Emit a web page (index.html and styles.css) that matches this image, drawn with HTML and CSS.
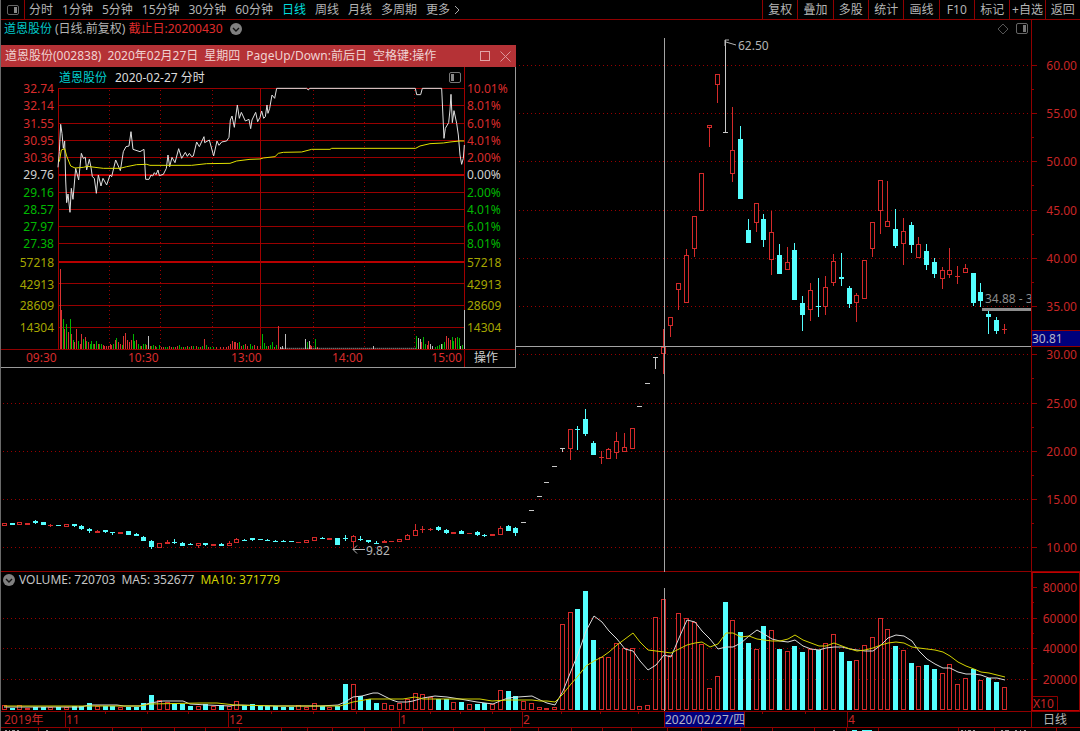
FILE: index.html
```html
<!DOCTYPE html>
<html lang="zh-CN">
<head>
<meta charset="utf-8">
<title>道恩股份 日线</title>
<link rel="stylesheet" href="styles.css">
</head>
<body>
<main class="app">
  <nav class="toolbar">
    <button class="panel-toggle" aria-label="侧栏">
      <svg width="12" height="12" viewBox="0 0 12 12"><rect x=".5" y="1.5" width="11" height="9" rx="1.5" fill="none" stroke="#666"/><rect x="7" y="3" width="3" height="6" fill="#888"/></svg>
    </button>
    <div class="periods">
      <button>分时</button><button>1分钟</button><button>5分钟</button><button>15分钟</button><button>30分钟</button><button>60分钟</button><button class="active">日线</button><button>周线</button><button>月线</button><button>多周期</button><button class="more">更多<svg width="6" height="10" viewBox="0 0 6 10"><path d="M1 1l4 4-4 4" fill="none" stroke="#aaa"/></svg></button>
    </div>
    <div class="actions">
      <button>复权</button><button>叠加</button><button>多股</button><button>统计</button><button>画线</button><button>F10</button><button>标记</button><button>+自选</button><button>返回</button>
    </div>
  </nav>

  <header class="chart-head">
    <div class="chart-title">
      <span class="name">道恩股份</span><span class="mode">(日线.前复权)</span><span class="until">截止日:20200430</span>
      <button class="round" aria-label="展开"><svg width="12" height="12" viewBox="0 0 12 12"><circle cx="6" cy="6" r="6" fill="#808080"/><path d="M3 5l3 3 3-3" fill="none" stroke="#111" stroke-width="1.4"/></svg></button>
    </div>
    <div class="head-icons">
      <svg width="12" height="12" viewBox="0 0 12 12"><path d="M6 1l5 5-5 5-5-5z" fill="none" stroke="#555"/></svg>
      <svg width="12" height="12" viewBox="0 0 12 12"><rect x=".5" y=".5" width="11" height="10" rx="1.5" fill="none" stroke="#666"/><rect x="7" y="2" width="3" height="7" fill="#777"/></svg>
    </div>
    <div class="axis-cell"></div>
  </header>
  <svg id="price" class="chart" viewBox="1 38 1079 534" role="img" aria-label="日线"></svg>

  <header class="volume-head">
    <div class="volume-title">
      <button class="round" aria-label="展开"><svg width="12" height="12" viewBox="0 0 12 12"><circle cx="6" cy="6" r="6" fill="#808080"/><path d="M3 5l3 3 3-3" fill="none" stroke="#111" stroke-width="1.4"/></svg></button>
      <span>VOLUME: 720703</span><span>MA5: 352677</span><span class="ma10">MA10: 371779</span>
    </div>
    <div class="axis-cell"></div>
  </header>
  <svg id="volume" class="chart" viewBox="1 588 1079 143" role="img" aria-label="成交量"></svg>

  <section class="popup">
    <header class="popup-head">
      <h1><span>道恩股份(002838)</span> <span>2020年02月27日</span> <span>星期四</span> <span>PageUp/Down:前后日</span> <span>空格键:操作</span></h1>
      <button aria-label="最大化"><svg width="11" height="11" viewBox="0 0 11 11"><rect x=".5" y=".5" width="9" height="9" fill="none" stroke="#e2a5a7"/></svg></button>
      <button aria-label="关闭"><svg width="11" height="11" viewBox="0 0 11 11"><path d="M.5.5l10 10M10.500.5l-10 10" fill="none" stroke="#dc9799"/></svg></button>
    </header>
    <svg id="minute" class="chart" viewBox="1 67 514 300" role="img" aria-label="分时"></svg>
  </section>
</main>
<script src="chart.js"></script>
</body>
</html>
```

FILE: styles.css
```css
* { box-sizing: border-box; }
body {
  margin: 0;
  background: #000;
  color: #b4b4b4;
  font: 12px/16px "Noto Sans", "Noto Sans CJK SC", sans-serif;
}
button {
  display: flex;
  align-items: center;
  justify-content: center;
  padding: 0;
  border: 0;
  background: none;
  color: inherit;
  font: inherit;
  white-space: nowrap;
}
svg { display: block; flex: none; }
.app {
  position: relative;
  min-height: 100vh;
  border-left: 1px solid #6a6a6a;
  overflow: hidden;
}
.toolbar {
  display: flex;
  height: 20px;
  border-bottom: 1px solid #900000;
}
.panel-toggle { width: 24px; border-right: 1px solid #900000; }
.periods { display: flex; flex: 1; gap: 9px; padding-left: 4px; }
.periods .active { color: #00dede; }
.more { gap: 4px; }
.actions { display: grid; grid-template-columns: repeat(9, 1fr); width: 318px; }
.actions button { border-left: 1px solid #900000; }

.chart-head, .volume-head { display: flex; }
.chart-head { height: 18px; }
.chart-title, .volume-title { display: flex; align-items: center; flex: 1; }
.chart-title { padding-left: 3px; gap: 3px; }
.chart-title .name { color: #00c8c8; }
.until { color: #e02c2c; }
.round { margin-left: 4px; border-radius: 50%; }
.head-icons { display: flex; align-items: center; gap: 7px; padding-right: 3px; }
.axis-cell { width: 49px; border-left: 1px solid #900000; }
.volume-head { height: 16px; color: #c4c4c4; }
.volume-title { gap: 6px; }
.volume-title .round { margin: 0 -2px 0 2px; }
.ma10 { color: #d0d000; }
.volume-head .axis-cell { border-left: 2px solid #a00000; border-top: 1px solid #c00000; border-right: 1px solid #900000; }

.chart { width: 100%; height: auto; overflow: visible; }
.chart text { font-size: 12px; }

.popup {
  position: absolute;
  left: 0;
  top: 45px;
  width: 515px;
  border: solid #9a9a9a;
  border-width: 0 1px 1px 0;
  background: #000;
}
.popup-head {
  display: flex;
  align-items: center;
  gap: 9px;
  height: 22px;
  margin-right: -1px;
  padding: 0 5px 0 4px;
  background: #b53236;
  color: #f0d2d2;
}
.popup-head h1 {
  display: flex;
  flex: 1;
  gap: 6px;
  margin: 0;
  font: inherit;
  white-space: nowrap;
}
```

FILE: chart.js
```js
const RED = '#d42a2a', CYAN = '#54ffff', WHITE = '#c8c8c8';
const GRID = '#980000', FRAME = '#900000', LABEL = '#c82626', YELLOW = '#d4d400';

const text = (x, y, s, fill, anchor = 'start') =>
  `<text x="${x}" y="${y + 4}" fill="${fill}" text-anchor="${anchor}">${s}</text>`;
const rect = (x, y, w, h, fill) =>
  `<rect x="${x}" y="${y}" width="${w}" height="${h}" fill="${fill}" shape-rendering="crispEdges"/>`;
const hollow = (x, y, w, h) =>
  `<rect x="${x + .5}" y="${y + .5}" width="${w - 1}" height="${Math.max(h - 1, 1)}" fill="#000" stroke="${RED}"/>`;
const dotsH = (x1, x2, y) =>
  `<path d="M${x1} ${y + .5}H${x2}" stroke="${GRID}" stroke-dasharray="1 3"/>`;
const dotsV = (x, y1, y2) =>
  `<path d="M${x + .5} ${y1}V${y2}" stroke="#a00000" stroke-dasharray="1 3"/>`;
const line = (pts, stroke, extra = '') =>
  `<polyline points="${pts}" fill="none" stroke="${stroke}" ${extra}/>`;
const centre = i => Math.round(4.9 + 7.75 * i);

/* kind, high, body top, body bottom, low
   h hollow red, r solid red, c cyan, w white */
const candles = `h 523 523 526 526|c 523 523 525 525|h 522 522 525 525|r 523 523 525 525|c 520 521 523 524|c 522 522 525 525|r 524 525 526 527|c 525 525 526 526|h 524 524 527 527|c 524 524 526 527
c 525 526 529 530|c 528 529 531 533|r 530 531 533 533|c 530 530 532 533|c 532 532 533 535|r 532 532 534 534|c 531 531 535 535|c 533 534 536 536|c 536 537 541 541|c 540 541 547 549
h 543 543 548 548|r 540 542 544 544|c 539 542 543 544|c 542 543 546 546|c 543 544 545 545|h 543 543 546 548|c 543 543 545 546|r 544 544 546 546|c 543 544 546 546|h 541 543 546 546
h 538 539 543 543|c 539 540 541 541|c 538 538 540 541|c 539 539 540 540|c 539 540 541 541|c 540 541 542 542|c 540 541 542 542|c 541 541 542 542|r 542 542 543 543|h 540 540 543 543
h 537 537 541 541|c 537 538 539 539|r 538 538 540 540|c 538 538 545 545|c 535 538 539 541|h 535 536 542 549|c 536 539 540 541|c 540 540 542 543|c 541 543 544 544|r 540 541 543 543
r 541 541 542 542|h 539 539 542 542|h 534 535 540 540|h 524 530 536 536|r 526 529 530 533|r 528 529 530 531|c 526 527 530 531|c 529 530 533 534|r 532 532 534 534|c 530 531 534 534
r 533 533 534 534|c 531 532 535 536|c 534 535 536 537|r 534 534 536 536|h 526 528 535 535|c 525 526 531 531|c 527 528 533 536|w 522 522 523 523|w 510 510 511 511|w 496 496 497 497
w 482 482 483 483|w 466 466 467 467|w 448 448 449 452|h 429 429 449 460|c 426 429 430 450|c 409 419 434 436|c 441 443 455 455|r 451 457 458 464|h 448 449 459 459|h 432 441 453 459
h 433 447 452 452|h 428 428 449 449|w 406 406 407 407|w 383 383 384 384|w 357 357 358 369|h 329 347 354 374|h 317 317 326 337|h 283 283 290 310|h 249 255 303 303|h 216 216 249 257
h 173 173 211 211|h 125 125 128 147|h 74 74 85 103|w 40 132 133 133|h 107 150 174 182|c 126 139 199 199|c 219 230 243 243|h 203 203 223 232|c 214 219 240 247|h 211 232 260 275
c 244 255 274 274|h 247 262 270 270|c 243 250 300 300|c 296 303 315 331|h 283 290 310 321|c 278 306 307 317|h 276 287 307 315|h 254 261 283 286|c 253 277 279 286|c 286 288 304 308
h 293 295 303 322|h 260 260 299 299|h 222 222 249 257|h 180 180 211 234|h 181 221 227 227|c 209 229 246 248|h 218 231 244 265|c 222 225 245 253|h 237 244 258 258|c 244 251 265 270
c 258 262 274 278|h 267 270 279 289|h 248 270 275 278|r 266 276 277 284|h 264 268 273 273|c 273 273 303 306|c 283 292 301 307|c 311 314 317 334|c 317 320 331 334|r 324 329 330 334`
  .split(/[|\n]/).map(s => s.split(' '));

const volumeTop = [705,708,705,708,707,707,707,707,707,706,706,703,706,706,706,707,707,707,703,695,700,702,704,704,706,706,704,706,705,706,
  701,705,704,705,706,706,707,707,705,707,703,706,707,706,684,684,696,699,703,703,705,703,699,693,694,697,699,699,702,702,
  704,704,703,704,690,691,696,701,703,707,708,707,624,612,609,591,640,657,657,643,648,648,706,705,617,599,655,613,618,622,
  644,688,676,602,620,632,643,649,626,630,649,651,646,652,649,650,643,634,652,661,660,645,637,618,629,646,650,663,666,665,
  669,673,664,684,678,669,680,678,682,687];
/* early bars take the candle's colour, later ones are listed */
const fallingDays = [74, 75, 76, 93, 95, 96, 98, 100, 102, 103, 105, 108, 109, 115, 117, 119, 120, 125, 127, 128];
const isFalling = i => (i < 72 ? candles[i][0] === 'c' : fallingDays.includes(i));

const series = (s, ys) => s + ' ' + ys.map((y, k) => `${centre(68 + k)},${y}`).join(' ');
const ma5 = series('4,707 80,707 90,705 117,705 124,706 140,706 150,703 163,701 183,701 190,704 207,705 230,706 236,705 277,706 320,706 338,705 345,702 353,697 362,696 373,693 378,693 384,696 392,700 398,702 407,702 413,701 423,698 435,696 447,697 460,699 477,702 493,704 500,701 508,698 518,697',
  [696,700,703,705,691,671,654,631,616,622,631,639,649,651,661,670,665,655,657,638,620,622,631,639,649,647,647,643,636,630,634,639,641,642,640,646,649,650,648,647,647,649,650,651,651,645,638,635,636,641,651,659,664,668,668,672,674,674,675,678,678,680]);
const ma10 = series('4,706 140,706 150,704 200,703 217,703 235,705 277,706 340,706 353,702 370,699 403,699 415,697 423,699 480,699 492,701 508,700',
  [700,701,701,702,694,684,676,666,661,657,652,645,639,633,642,650,651,652,653,649,645,643,642,647,644,633,633,637,636,639,640,641,641,639,635,640,643,646,646,643,646,649,651,650,648,645,643,642,643,647,648,649,650,652,656,662,666,669,672,673,675,677]);

function drawPrice() {
  let s = '';
  for (let p = 60, k = 0; p >= 10; p -= 5, k++) {
    const y = Math.round(64.8 + 48.25 * k);
    s += dotsH(3, 1031, y) + rect(1031, y, 6, 1, FRAME) + text(1077, y + 1, p.toFixed(2), LABEL, 'end');
    if (k < 10) s += rect(1031, y + 24, 3, 1, FRAME);
  }
  s += rect(1031, 38, 1, 534, FRAME) + rect(1, 571, 1079, 1, FRAME);
  candles.forEach(([kind, ...v], i) => {
    const [high, top, bottom, low] = v.map(Number), x = centre(i);
    const color = kind === 'c' ? CYAN : kind === 'w' ? WHITE : RED;
    if (low > high) s += rect(x - 1, high, 1, low - high, color);
    s += kind === 'h' ? hollow(x - 3, top, 5, bottom - top) : rect(x - 3, top, 5, bottom - top, color);
  });
  s += '<path d="M736 45L726 42M725 46V40H729" fill="none" stroke="#b4b4b4"/>' + text(738, 46, '62.50', '#b4b4b4');
  s += '<path d="M365 549.500H353M357 545.500l-4 4 4 4" fill="none" stroke="#b4b4b4"/>' + text(366, 551, '9.82', '#b4b4b4');
  s += `<svg x="982" y="290" width="49" height="16">${text(3, 9, '34.88 - 3', '#8c8c8c')}</svg>`;
  s += rect(982, 308, 49, 3, '#8c8c8c');
  s += rect(1032, 331, 48, 15, '#00007c') + rect(1031, 330, 49, 1, FRAME) + rect(1031, 346, 49, 1, FRAME);
  s += text(1032, 339, '30.81', '#b4b4c8');
  s += rect(516, 346, 515, 1, '#a4a4a4') + rect(664, 38, 1, 534, '#a4a4a4');
  document.getElementById('price').innerHTML = s;
}

function drawVolume() {
  let s = '';
  [['80000', 587], ['60000', 618], ['40000', 648], ['20000', 679]].forEach(([label, y]) => {
    if (y > 590) s += dotsH(3, 1031, y);
    s += rect(1031, y, 6, 1, FRAME) + text(1077, y + 1, label, LABEL, 'end');
    if (y < 670) s += rect(1031, y + 15, 3, 1, FRAME);
  });
  volumeTop.forEach((top, i) => {
    const x = centre(i) - 3;
    s += isFalling(i) ? rect(x, top, 5, 710 - top, CYAN) : hollow(x, top, 5, 710 - top);
  });
  s += line(ma5, '#dcdcdc') + line(ma10, YELLOW);
  s += rect(664, 588, 1, 123, '#a4a4a4');
  s += `<path d="M1032 696.500H1057.500V710" fill="none" stroke="${FRAME}"/>` + text(1033, 704, 'X10', LABEL);
  s += rect(1031, 588, 2, 123, '#a00000') + rect(1031, 710, 49, 1, '#c00000') + rect(1079, 588, 1, 123, FRAME);
  s += rect(1, 711, 1079, 1, FRAME) + rect(1, 727, 1079, 1, FRAME) + rect(1031, 711, 1, 17, FRAME);
  [105, 147, 188, 271, 313, 356, 430, 460, 492, 561, 600, 638, 762, 805].forEach(x => { s += rect(x, 712, 1, 2, FRAME); });
  [[65, '11'], [228, '12'], [399, '1'], [522, '2'], [847, '4']].forEach(([x, label]) => {
    s += rect(x, 712, 1, 15, FRAME) + text(x + 1, 720, label, LABEL);
  });
  s += text(4, 720, '2019年', LABEL) + text(1043, 720, '日线', '#b4b4b4');
  s += rect(664, 712, 80, 15, '#00007c') + `<path d="M664.500 711.500H744.500V727.500H664.500z" fill="none" stroke="${FRAME}"/>`;
  s += text(665, 720, '2020/02/27/四', '#b4b4c8');
  [38, 69, 112, 141, 174, 205, 239, 281, 307, 332, 364, 391, 422, 453, 484, 510, 538, 571, 602, 631, 667, 701, 740, 772, 814, 846, 878, 958, 994, 1056]
    .forEach(x => { s += rect(x, 728, 1, 3, FRAME); });
  [[5, 2], [9, 1], [12, 3], [17, 2], [46, 2], [833, 2], [961, 2], [965, 1], [968, 3], [973, 2], [1001, 2], [1005, 4], [1015, 2], [1020, 1], [1024, 2]]
    .forEach(([x, w]) => { s += rect(x, 730, w, 1, '#999'); });
  s += rect(852, 730, 5, 1, CYAN) + rect(862, 730, 10, 1, CYAN);
  document.getElementById('volume').innerHTML = s;
}

function drawMinute() {
  /* tick paths and bars are in thirds of a grid unit, origin at y = 80 */
  const price = '174,262 178,215 182,133 186,160 190,205 194,183 197,300 200,368 204,342 210,397 214,325 219,358 227,265 236,300 244,220 250,235 256,232 260,270 268,238 273,262 277,290 283,295 289,340 295,285 303,318 309,295 320,315 330,285 335,290 347,240 361,272 370,215 378,200 387,198 393,155 399,208 420,215 432,208 437,298 447,298 453,285 458,288 463,278 468,284 474,270 478,287 490,283 499,265 504,225 509,260 516,232 525,248 536,206 545,235 556,217 562,229 568,220 575,230 580,228 590,186 598,200 612,170 614,188 628,180 641,228 651,183 657,196 665,186 680,183 687,172 691,120 696,108 703,142 712,75 718,115 724,97 736,123 747,118 752,146 756,120 767,97 773,125 780,112 785,93 791,115 796,110 801,75 804,100 809,85 816,45 824,55 830,25 920,25 925,30 929,25 1246,25 1250,44 1262,44 1267,25 1325,25 1332,175 1336,145 1346,128 1350,90 1353,43 1357,128 1362,92 1370,130 1375,165 1380,225 1385,253 1390,235 1393,195';
  const average = '178,245 184,210 194,206 200,228 212,258 225,264 250,262 262,259 285,262 310,265 360,265 380,260 410,254 440,253 450,256 575,256 620,251 690,250 710,243 750,238 780,237 790,234 825,230 835,220 850,217 905,216 935,208 990,208 995,205 1247,205 1260,198 1290,191 1330,189 1350,186 1380,183 1393,183';
  const bars = 'r180:240 r183:116 g189:89 r194:61 g198:76 r204:51 g210:89 r213:46 g220:26 r224:21 r229:61 g235:23 r240:16 r244:46 g250:31 r256:36 g260:23 r265:22 g270:16 g275:23 g280:16 r284:14 g289:23 r294:14 g299:15 g304:16 r309:12 r314:10 r320:10 r325:8 r330:14 r335:12 g340:14 r345:26 g350:34 r355:20 r361:14 g366:12 r371:38 r377:48 r383:26 r388:20 r394:26 g399:45 g404:24 r409:26 g415:16 g420:10 r425:9 g430:14 g435:14 r440:12 w445:40 r450:10 g455:8 g460:12 r465:8 g470:6 g478:12 r484:7 r490:6 g496:7 g502:5 r508:8 r514:5 g520:5 r526:7 r532:8 g538:12 g544:6 r550:5 g556:7 r562:8 g568:5 r574:9 g580:8 r588:10 g594:7 r600:6 g606:8 r612:30 g618:13 r624:5 g630:5 g640:5 r650:5 r660:6 r670:5 r680:7 r686:10 r692:14 r697:24 r702:22 r707:20 r713:18 g718:20 r724:9 g730:12 r736:14 r742:8 g750:14 g757:8 r764:12 r772:10 r780:10 g788:45 g794:18 g800:8 r806:10 g812:12 g818:20 r824:6 g830:12 r834:70 w842:5 w848:8 w855:46 w916:30 g922:22 w927:24 r930:12 r935:8 g946:30 r952:6 w1121:10 g1250:38 w1255:34 w1260:30 r1264:20 g1270:36 g1276:14 r1281:12 r1286:24 w1292:14 w1296:10 g1305:6 g1312:9 g1318:12 w1324:14 g1328:16 g1334:20 r1339:38 r1344:32 r1350:28 g1356:36 g1361:24 r1366:34 g1371:36 g1377:34 w1382:8 g1387:12 w1393:116';
  const tone = { r: '#d83232', g: '#00b400', w: '#bdbdbd' };
  let s = '';
  [88, 105, 123, 140, 157, 175, 192, 209, 226, 243, 262, 283, 305, 327, 349].forEach(y => {
    const strong = y === 175 || y === 262;
    s += rect(58, strong ? y - 1 : y, 407, strong ? 2 : 1, strong ? '#b80000' : '#980000');
  });
  [109, 160, 212, 313, 364, 414].forEach(x => { s += dotsV(x, 90, 349); });
  s += rect(58, 88, 1, 262, '#a00000') + rect(260, 88, 1, 262, '#a00000') + rect(464, 67, 1, 300, '#a00000') + rect(1, 349, 514, 1, FRAME);
  const red = '#d82c2c', green = '#00b800', olive = '#a6a600', mid = '#cfcfcf';
  const rows = [['32.74', '10.01%', red], ['32.14', '8.01%', red], ['31.55', '6.01%', red], ['30.95', '4.01%', red], ['30.36', '2.00%', red],
    ['29.76', '0.00%', mid], ['29.16', '2.00%', green], ['28.57', '4.01%', green], ['27.97', '6.01%', green], ['27.38', '8.01%', green]];
  rows.forEach(([a, b, c], k) => {
    const y = Math.round(89 + 17.25 * k);
    s += text(54, y, a, c, 'end') + text(467, y, b, c);
  });
  [['57218', 263], ['42913', 285], ['28609', 306], ['14304', 328]].forEach(([v, y]) => {
    s += text(54, y, v, olive, 'end') + text(467, y, v, olive);
  });
  s += text(26, 358, '09:30', red) + text(128, 358, '10:30', red) + text(231, 358, '13:00', red) + text(332, 358, '14:00', red);
  s += text(462, 358, '15:00', red, 'end') + text(474, 358, '操作', mid);
  s += text(59, 78, '道恩股份', '#00d0d0') + text(115, 78, '2020-02-27 分时', '#dcdcdc');
  s += '<rect x="449.500" y="72.500" width="11" height="10" rx="1.500" fill="none" stroke="#777"/>' + rect(451, 74, 3, 7, '#888');
  s += '<g transform="translate(0 80) scale(.33333)">';
  bars.split(' ').forEach(b => {
    const [x, h] = b.slice(1).split(':').map(Number);
    s += rect(x - 1, 807 - h, 3, h, tone[b[0]]);
  });
  s += line('842,805 1248,805', '#c8c8c8', 'stroke-width="3" stroke-dasharray="3 3"');
  s += line(price, '#e0e0e0', 'vector-effect="non-scaling-stroke"') + line(average, '#e0e000', 'vector-effect="non-scaling-stroke"') + '</g>';
  document.getElementById('minute').innerHTML = s;
}

drawPrice();
drawVolume();
drawMinute();
```
